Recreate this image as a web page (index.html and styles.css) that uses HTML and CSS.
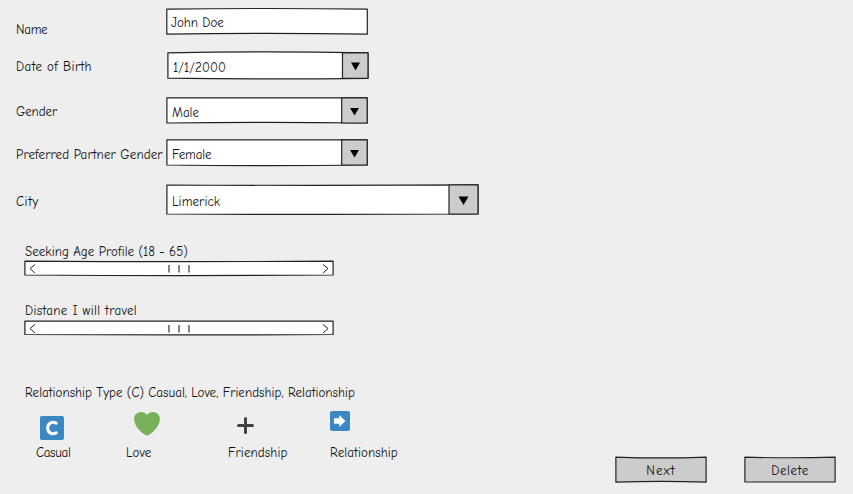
FILE: index.html
```html
<!DOCTYPE html>
<html lang="en">
<head>
<meta charset="utf-8">
<title>Profile</title>
<link rel="stylesheet" href="styles.css">
</head>
<body>
<main class="page">
  <section class="details">
    <div class="row row-name"><label class="label">Name</label>
      <div class="field"><svg class="sketch" viewBox="0 0 202 28"><path class="white" d="M.8 1.2Q100-.2 201.300 1.200V26.200Q100 24.500.8 26.200Z"/></svg><span class="value">John Doe</span></div>
    </div>
    <div class="row row-dob"><label class="label">Date of Birth</label>
      <div class="field"><svg class="sketch" viewBox="0 0 202 28"><path class="white" d="M.9.8Q100-1.200 201 .9V26.300Q100 27.400.9 26.200Z"/><path class="grey" d="M175.500 1 201 .9V26.300H175.500Z"/><path class="arrow" d="M184 10.500h9l-4.500 8z"/></svg><span class="value">1/1/2000</span></div>
    </div>
    <div class="row row-gender"><label class="label">Gender</label>
      <div class="field"><svg class="sketch" viewBox="0 0 202 28"><path class="white" d="M.9.9H201.200V26Q100 24.600.9 26Z"/><path class="grey" d="M175.700.9H201.200V26H175.700Z"/><path class="arrow" d="M184 11h9l-4.500 7.500z"/></svg><span class="value">Male</span></div>
    </div>
    <div class="row row-partner"><label class="label">Preferred Partner Gender</label>
      <div class="field"><svg class="sketch" viewBox="0 0 202 28"><path class="white" d="M.9.9H201.200V26Q100 27.100.9 26Z"/><path class="grey" d="M175.700.9H201.200V26H175.700Z"/><path class="arrow" d="M184 11h9l-4.500 7.500z"/></svg><span class="value">Female</span></div>
    </div>
    <div class="row row-city"><label class="label">City</label>
      <div class="field wide"><svg class="sketch" viewBox="0 0 313 32"><path class="white" d="M.9 1Q160 1.700 312 .9V30Q160 30.800.9 30Z"/><path class="grey" d="M283 1 312 .9V30H283Z"/><path class="arrow" d="M292.500 12.500h10l-5 8.500z"/></svg><span class="value">Limerick</span></div>
    </div>
    <div class="range range-age"><span class="text age">Seeking Age Profile (18 - 65)</span>
      <svg class="scroll" viewBox="0 0 310 17"><path class="white" d="M.9 1.100Q155 2.200 309.100 1.100V15Q155 16.200.9 15Z"/><path class="chevron" d="M11 4.500 6 8.500l5 4.500M299 4.500l5 4-5 4.500"/><path class="grip" d="M145 5v7.500M155 5v7.500M165 5v7.500"/></svg>
    </div>
    <div class="range"><span class="text distance">Distane I will travel</span>
      <svg class="scroll" viewBox="0 0 310 17"><path class="white" d="M.9 1.100H309.100V14.500Q155 15.400.9 14.500Z"/><path class="chevron" d="M11 4.500 6 8.500l5 4.500M299 4.500l5 4-5 4.500"/><path class="grip" d="M145 5v7.500M155 5v7.500M165 5v7.500"/></svg>
    </div>
    <h2 class="heading">Relationship Type (C) Casual, Love, Friendship, Relationship</h2>
    <div class="types">
      <div class="type"><div class="picture"><svg class="icon-c" viewBox="0 0 24 24"><rect width="24" height="24" rx="2" fill="#3b88c3"/><path d="M16.300 7.200C12.500 4.800 7.700 7 7.700 12s4.800 7.200 8.600 4.800" fill="none" stroke="#fff" stroke-width="3" stroke-linecap="round"/></svg></div><span class="text casual">Casual</span></div>
      <div class="type"><div class="picture"><svg class="icon-heart" viewBox="0 0 36 33"><path fill="#78b159" d="M35.900 9.800c0-5.400-4.400-9.800-9.800-9.800C22.800 0 19.900 1.700 18 4.200 16.200 1.700 13.200 0 9.900 0 4.500 0 .1 4.400.1 9.800c0 .8.100 1.500.3 2.200C1.800 21.200 11.500 30.300 18 32.600c6.500-2.300 16.200-11.400 17.600-20.600.2-.7.300-1.400.3-2.200z"/></svg></div><span class="text love">Love</span></div>
      <div class="type"><div class="picture"><svg class="icon-plus" viewBox="0 0 17 17"><path d="M8.500 1.500v14M1.500 8.500h14" stroke="#404144" stroke-width="3" stroke-linecap="round"/></svg></div><span class="text friendship">Friendship</span></div>
      <div class="type"><div class="picture"><svg class="icon-arrow" viewBox="0 0 20 20"><rect width="20" height="20" rx="2" fill="#3b88c3"/><path fill="#fff" d="M4 7.200h5.200V4l6.300 6-6.300 6v-3.200H4z"/></svg></div><span class="text relation">Relationship</span></div>
    </div>
  </section>
  <nav class="actions">
    <button class="button"><svg class="sketch" viewBox="0 0 92 28"><path class="grey" d="M.9 1.100Q46 2.800 91.100 1.100V26.200Q46 24.500.9 26.200Z"/></svg><span class="value next">Next</span></button>
    <button class="button"><svg class="sketch" viewBox="0 0 92 28"><path class="grey" d="M.9 1.100Q46 2.400 91.100 1.100V26H.9Z"/></svg><span class="value delete">Delete</span></button>
  </nav>
</main>
</body>
</html>
```
FILE: styles.css
```css
* { box-sizing: border-box; }
body { margin: 0; background: #eee; color: #111; font: 13px/18px "Comic Neue", "Comic Sans MS", Lato, sans-serif; white-space: nowrap; }
.page { display: flex; width: 853px; height: 494px; overflow: hidden; }
.details { width: 615px; padding-top: 8px; }
.row { display: grid; grid-template-columns: 150px 1fr; align-items: start; padding-left: 16px; }
.row-name { height: 44px; }
.row-dob { height: 45px; }
.row-gender { height: 42px; }
.row-partner { height: 45px; }
.row-city { height: 58px; }
.label { padding-top: 6px; }
.row-name .label { padding-top: 13px; letter-spacing: -.3px; }
.row-dob .label { letter-spacing: .4px; }
.row-gender .label { letter-spacing: -.1px; }
.row-partner .label { padding-top: 7px; letter-spacing: .13px; }
.row-city .label { padding-top: 9px; letter-spacing: .6px; }
.field { position: relative; width: 202px; height: 28px; padding: 7px 0 0 6px; }
.row-name .field { padding: 6px 0 0 5px; }
.row-dob .field { margin-left: 1px; letter-spacing: .1px; }
.row-partner .field { letter-spacing: -.1px; }
.field.wide { width: 313px; height: 32px; padding-top: 9px; letter-spacing: .1px; }
.sketch { position: absolute; inset: 0; width: 100%; height: 100%; overflow: visible; }
.value { position: relative; display: block; }
.white, .grey { stroke: #222; stroke-width: 1.2; stroke-linejoin: round; }
.white { fill: #fff; }
.grey { fill: #ccc; }
.arrow { fill: #000; }
.range { height: 59px; padding-left: 25px; }
.text { display: block; height: 18px; padding-top: 1px; }
.age { letter-spacing: .05px; }
.distance { letter-spacing: .35px; }
.casual { letter-spacing: -.3px; }
.love { letter-spacing: .2px; }
.friendship, .relation { letter-spacing: .1px; }
.next { letter-spacing: 1.1px; }
.delete { letter-spacing: .6px; }
.scroll { display: block; width: 310px; height: 17px; margin-left: -1px; }
.range + .range .scroll { margin-top: 1px; }
.chevron { fill: none; stroke: #222; stroke-width: 1; }
.grip { fill: none; stroke: #777; stroke-width: 1.8; }
.heading { height: 18px; padding-top: 1px; margin: 23px 0 0 25px; font: inherit; letter-spacing: .03px; }
.types { display: grid; grid-template-columns: 90px 102px 102px 100px; padding-left: 36px; }
.picture { height: 42px; overflow: hidden; }
.picture svg { display: block; }
.icon-c { width: 24px; height: 24px; margin: 15px 0 0 4px; }
.icon-heart { width: 26px; height: 24px; margin: 11px 0 0 8px; }
.icon-plus { width: 17px; height: 17px; margin: 16px 0 0 9px; }
.icon-arrow { width: 20px; height: 20px; margin: 10px 0 0; }
.actions { display: flex; gap: 37px; align-self: flex-end; margin-bottom: 10px; }
.button { position: relative; width: 92px; height: 28px; border: 0; padding: 1px 0 0; background: none; color: inherit; font: inherit; }
```
